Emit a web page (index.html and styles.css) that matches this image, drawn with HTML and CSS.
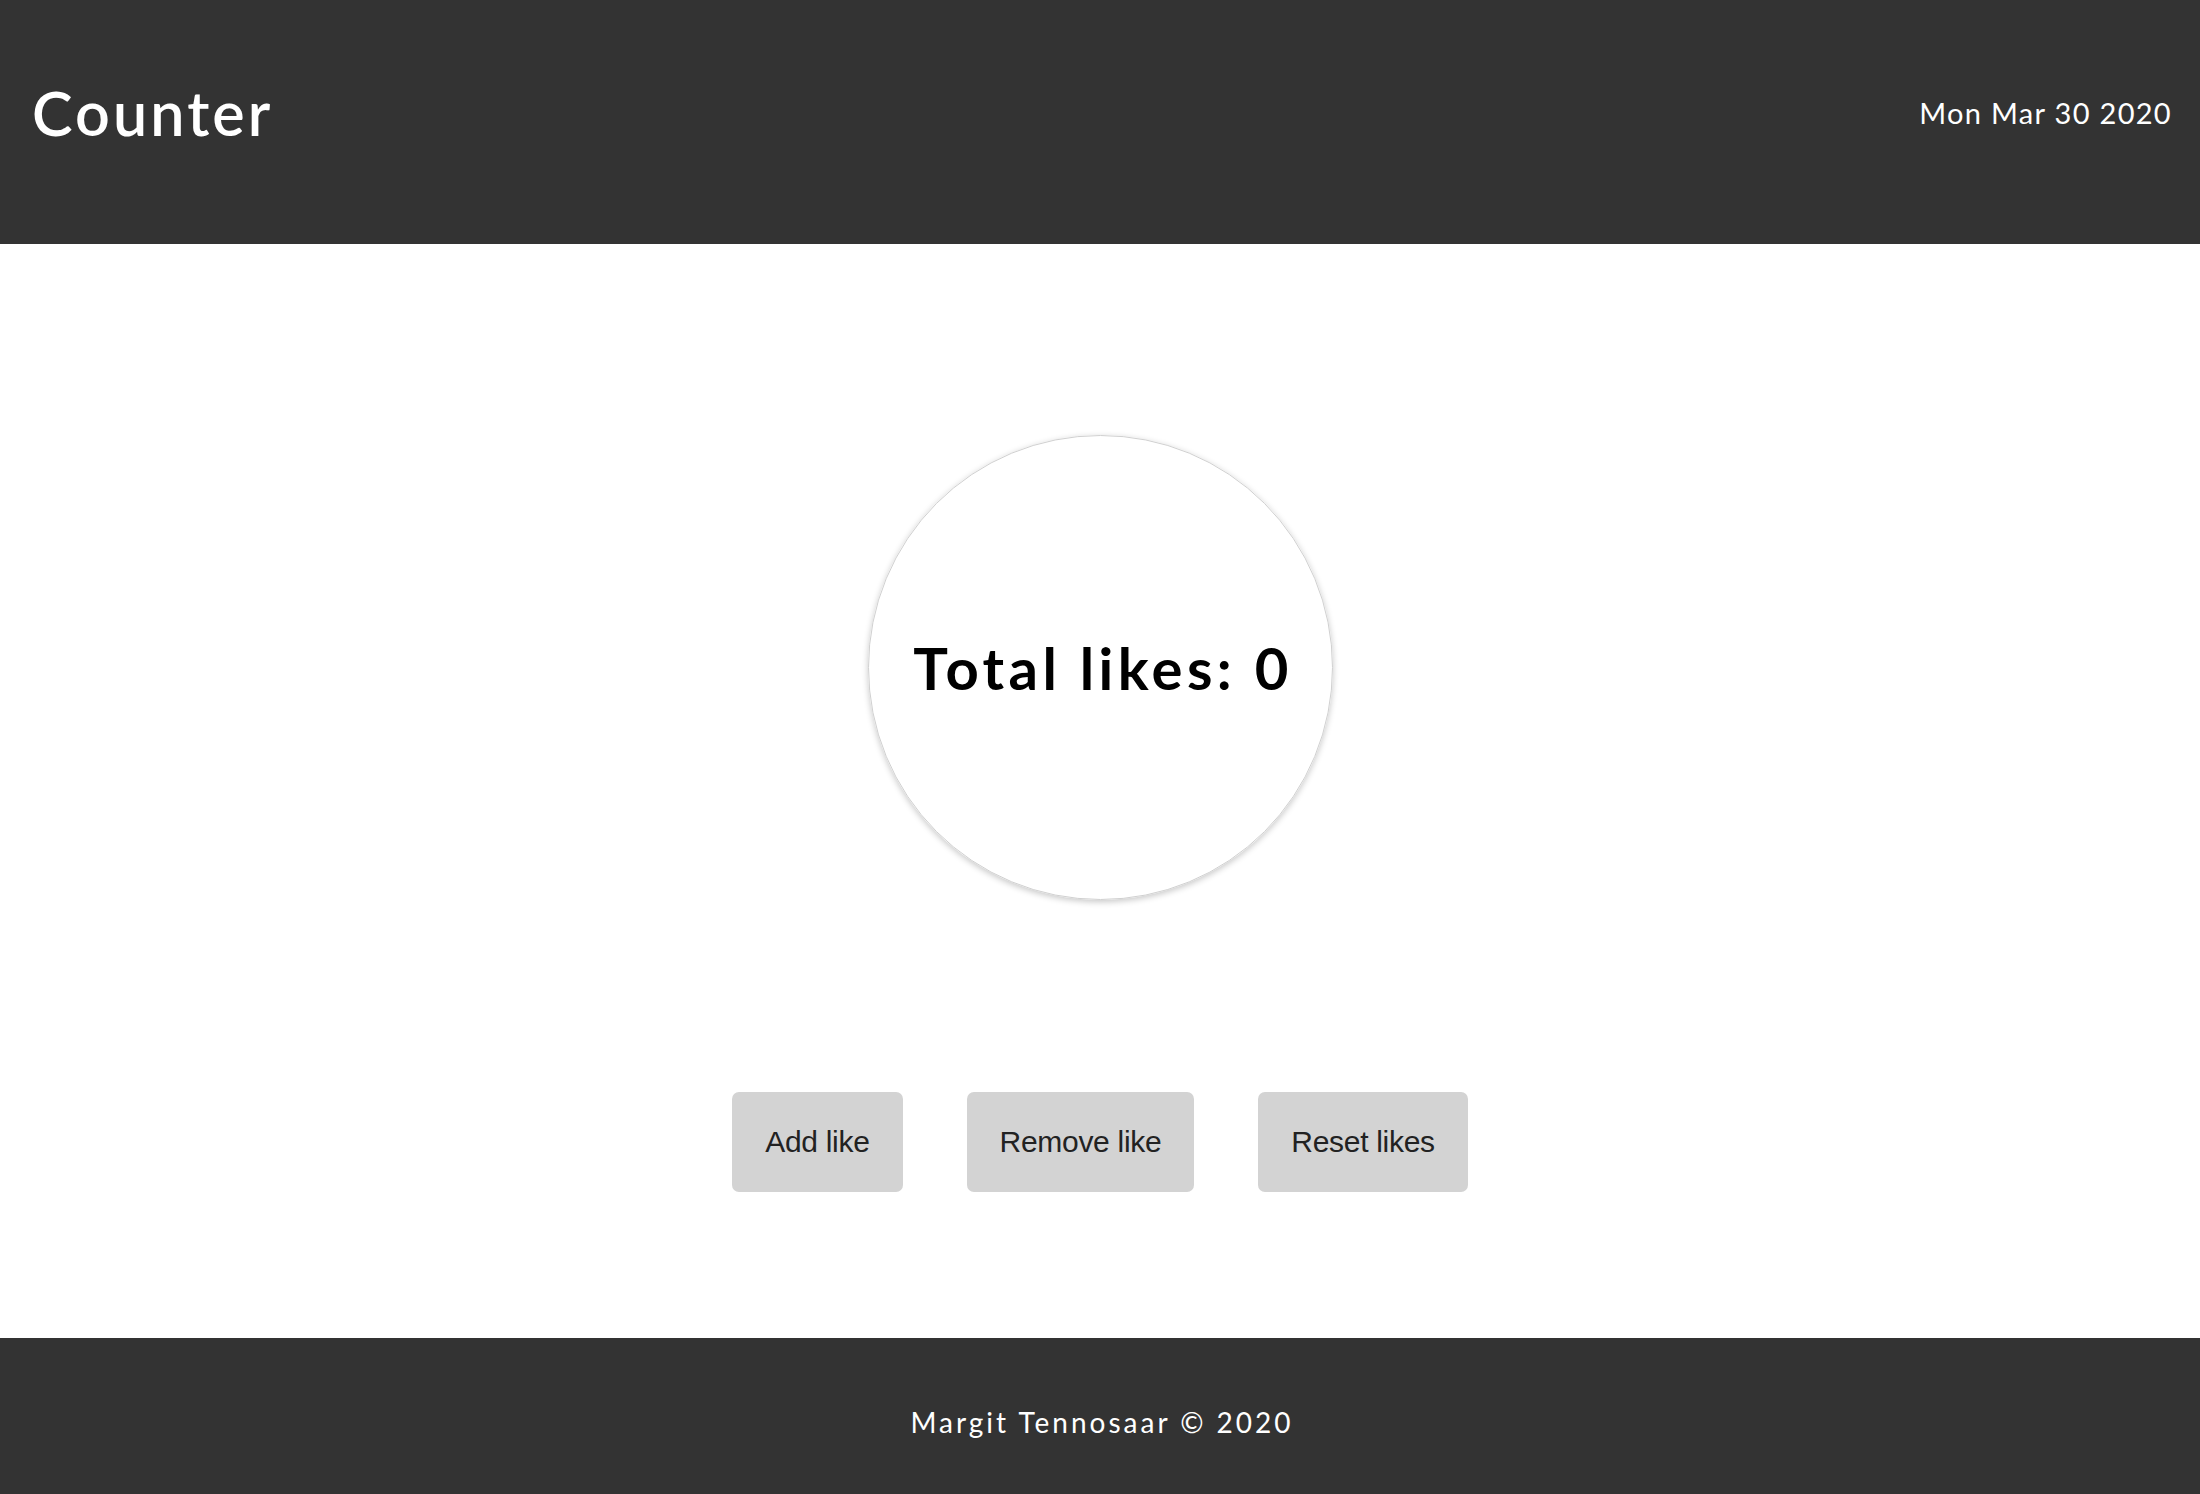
FILE: index.html
```html
<!DOCTYPE html>
<html lang="en">
<head>
<meta charset="utf-8">
<title>Counter</title>
<link rel="stylesheet" href="styles.css">
</head>
<body>
<div class="page">
  <header class="header">
    <h1 class="title">Counter</h1>
    <span class="date">Mon Mar 30 2020</span>
  </header>
  <main class="main">
    <div class="circle">
      <h2 class="total">Total likes: 0</h2>
    </div>
    <div class="buttons">
      <button class="btn">Add like</button>
      <button class="btn">Remove like</button>
      <button class="btn">Reset likes</button>
    </div>
  </main>
  <footer class="footer">
    <span class="copy">Margit Tennosaar © 2020</span>
  </footer>
</div>
</body>
</html>
```

FILE: styles.css
```css
html, body {
  margin: 0;
  padding: 0;
  background: #fff;
}
.page {
  display: flex;
  flex-direction: column;
  min-height: 1494px;
  font-family: Lato, "Open Sans", sans-serif;
}
.header {
  height: 244px;
  background: #333333;
  color: #fff;
  display: flex;
  align-items: center;
  justify-content: space-between;
  padding: 0 28px 20px 32px;
  box-sizing: border-box;
}
.title {
  margin: 0;
  font-size: 61px;
  font-weight: 600;
  letter-spacing: 3.1px;
}
.date {
  font-size: 29px;
  letter-spacing: 1.3px;
}
.main {
  flex: 1;
  display: flex;
  flex-direction: column;
  align-items: center;
  padding-top: 191px;
}
.circle {
  width: 465px;
  height: 465px;
  border-radius: 50%;
  border: 1px solid #d0d0d0;
  box-sizing: border-box;
  box-shadow: 0 2px 6px rgba(0, 0, 0, 0.22);
  display: flex;
  align-items: center;
  justify-content: center;
}
.total {
  margin: 0 0 0 6px;
  font-size: 58px;
  font-weight: 700;
  letter-spacing: 4.4px;
  color: #000;
}
.buttons {
  margin-top: 192px;
  display: flex;
  gap: 64px;
}
.btn {
  height: 100px;
  padding: 0 33px;
  border: none;
  border-radius: 7px;
  background: #d3d3d3;
  color: #222;
  font-family: "Liberation Sans", Arial, sans-serif;
  font-size: 30px;
  letter-spacing: -0.3px;
}
.footer {
  height: 156px;
  background: #333333;
  color: #fff;
  display: flex;
  align-items: center;
  justify-content: center;
  padding-top: 12px;
  box-sizing: border-box;
}
.copy {
  font-size: 28px;
  letter-spacing: 3px;
  margin-left: 4px;
}
```
